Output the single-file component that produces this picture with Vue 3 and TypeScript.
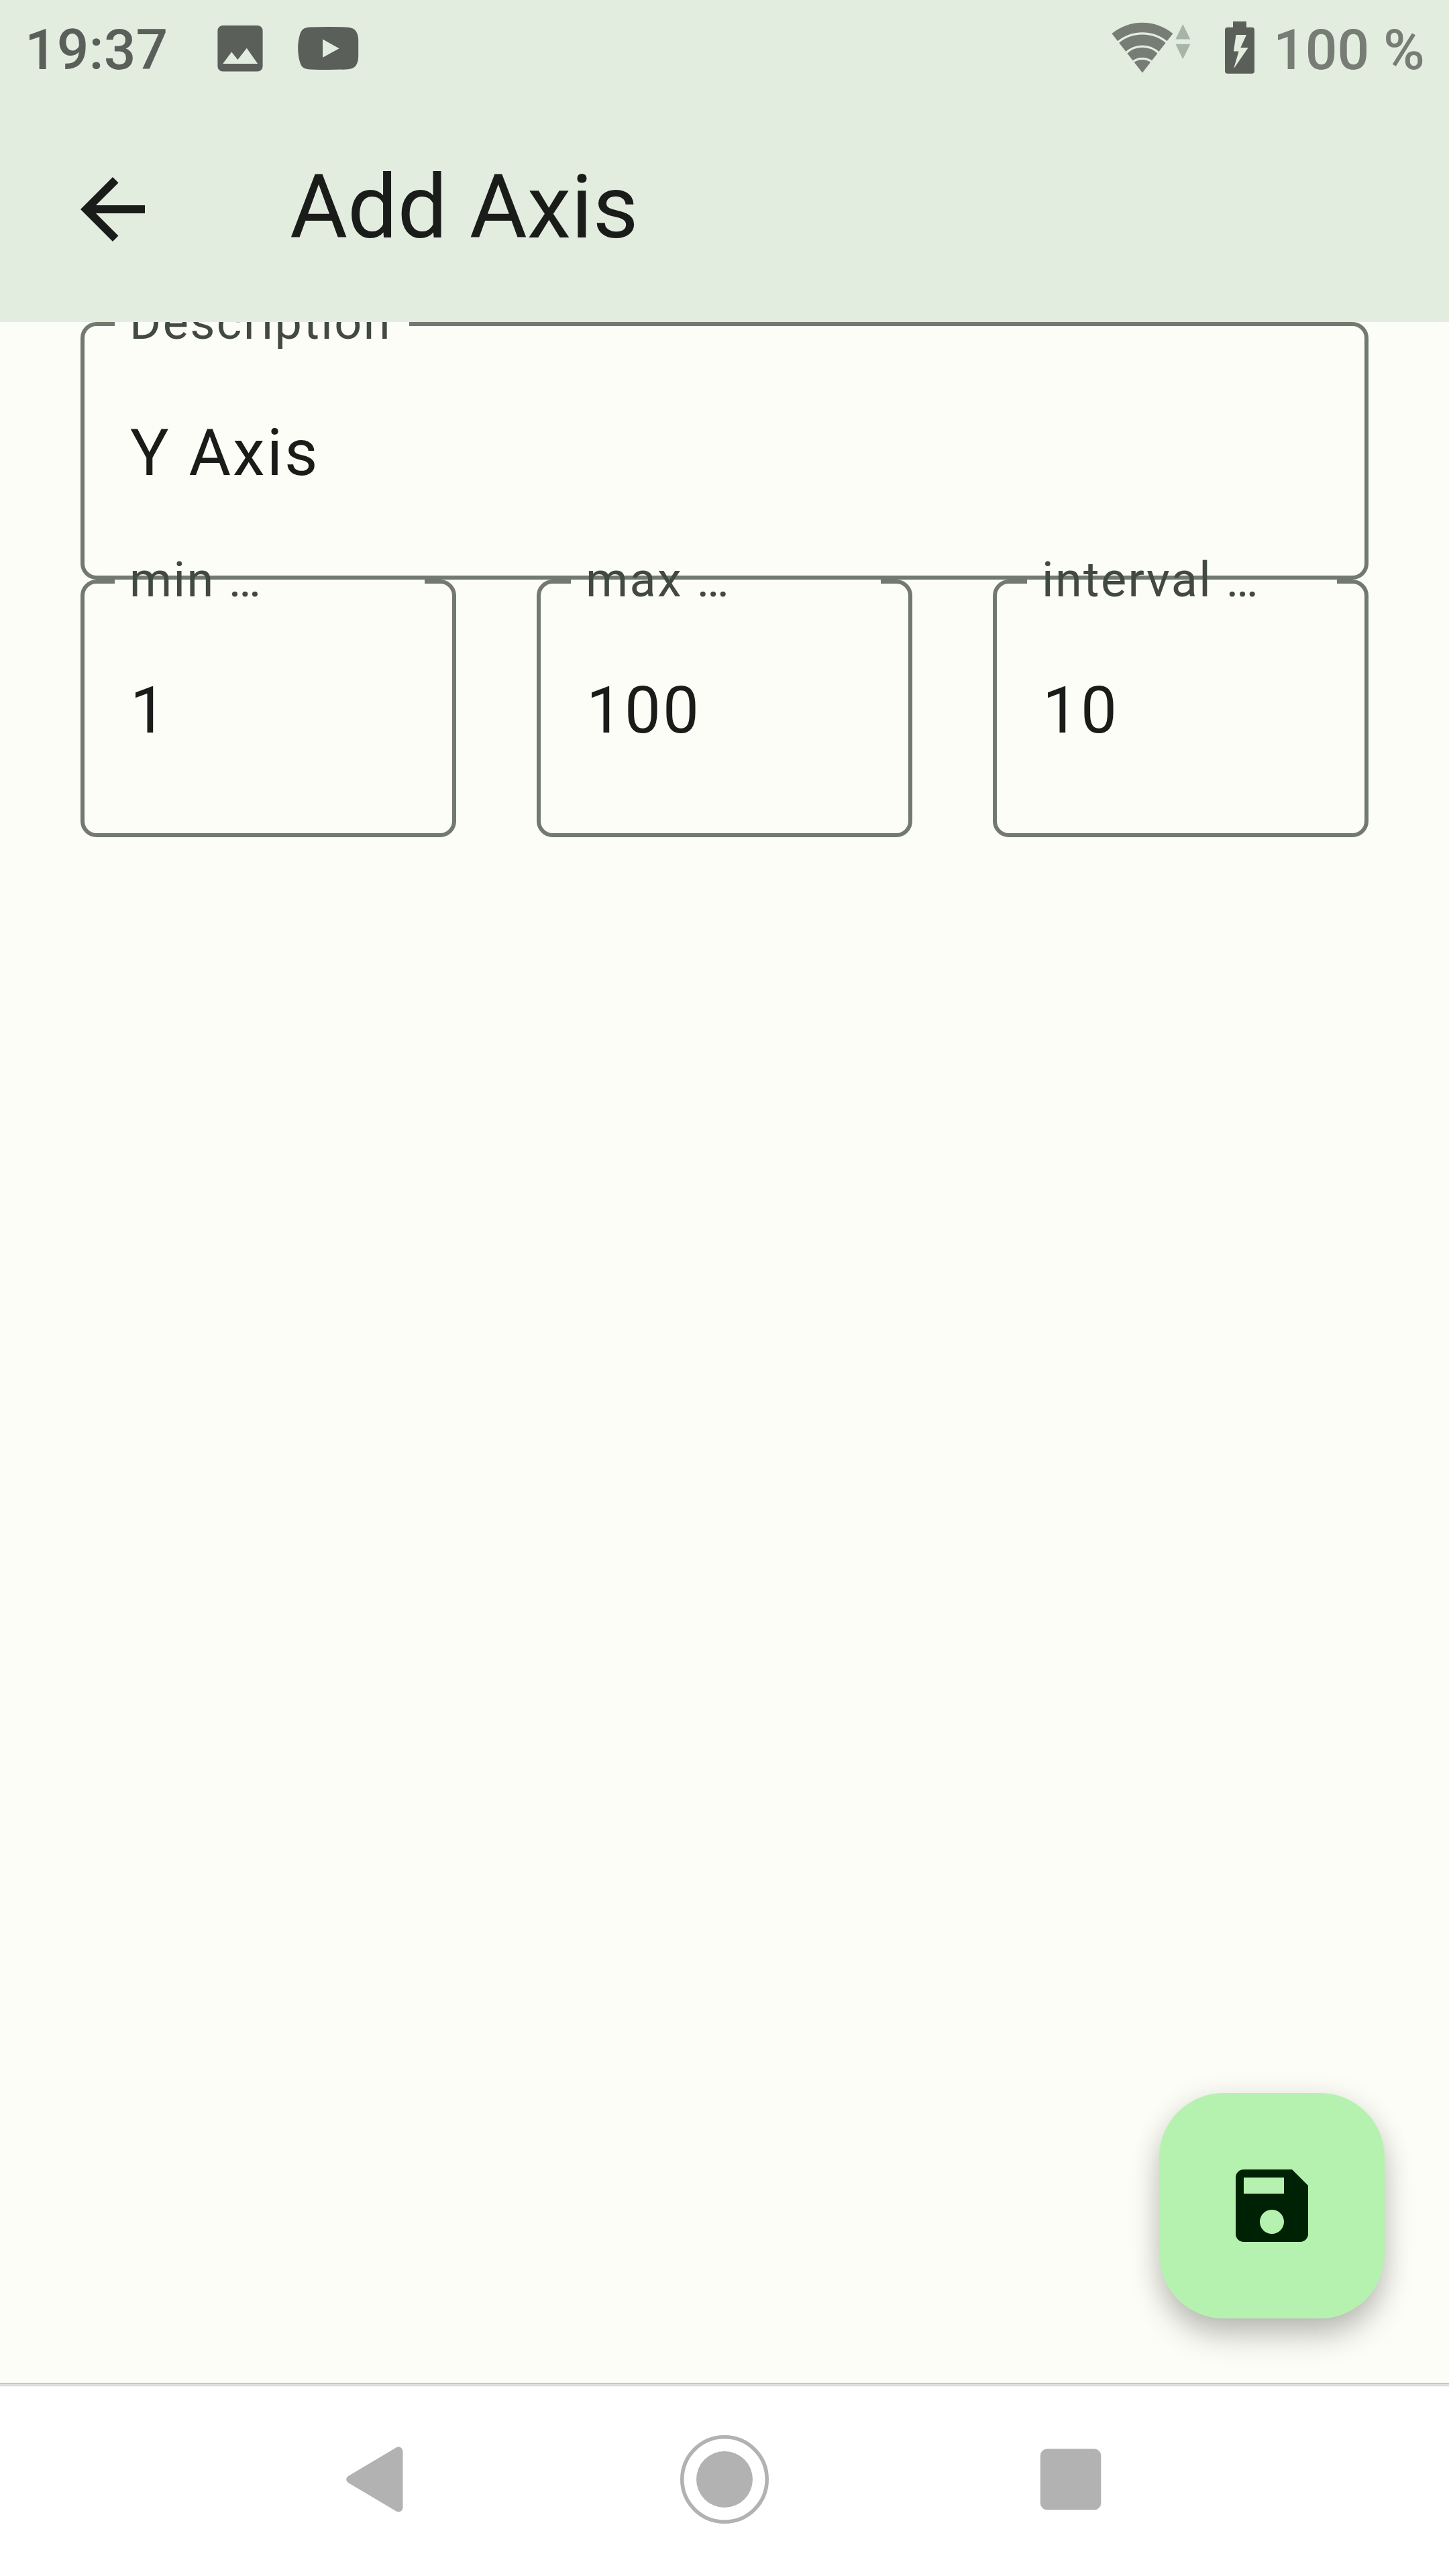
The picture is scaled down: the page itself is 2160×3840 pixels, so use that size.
<script setup lang="ts">
interface Field {
  label: string
  value: string
}

const description: Field = { label: 'Description', value: 'Y Axis' }
const range: Field[] = [
  { label: 'min …', value: '1' },
  { label: 'max …', value: '100' },
  { label: 'interval …', value: '10' },
]
</script>

<template>
  <div class="screen">
    <header class="top">
      <div class="status">
        <span class="clock">19:37</span>
        <svg class="s-image" viewBox="318 0 80 144" width="80" height="144">
          <path fill-rule="evenodd" d="M332 38H384a7.6 7.6 0 0 1 7.6 7.6V99a7.6 7.6 0 0 1-7.6 7.6H332a7.6 7.6 0 0 1-7.6-7.6V45.6A7.6 7.6 0 0 1 332 38ZM332.2 95H384.2L367.8 71.7L354.4 89L345.2 77.5Z" />
        </svg>
        <svg class="s-video" viewBox="440 0 100 144" width="100" height="144">
          <path fill-rule="evenodd" d="M463 40.4Q489 39.4 515 40.4C526 40.6 530 43.5 532.4 50Q534.2 54 534.2 60V84Q534.2 90 532.4 94C530 100.500 526 103.200 515 103.400Q489 104.400 463 103.400C453 103.200 450 100.500 447.500 94C443 80 443 64 447.500 50C450 43.500 453 40.600 463 40.400ZM481 58.600V85.800L505.600 72.300Z" />
        </svg>
        <div class="status-right">
          <svg viewBox="1652 0 128 144" width="128" height="144">
            <path fill="#777c75" d="M1657.400 50A72 72 0 0 1 1748.400 50L1702.900 108.400Z" />
            <g fill="none" stroke="#e2ede0" stroke-width="3.300">
              <path d="M1665 64.400A57 57 0 0 1 1740.800 64.400" />
              <path d="M1677.500 79.900A35.500 35.500 0 0 1 1728.300 79.900" />
              <path d="M1688 92.900A23 23 0 0 1 1717.800 92.900" />
            </g>
            <path fill="#a9b4a9" d="M1752.400 58.400L1763.300 36L1774.300 58.400ZM1752.400 65.800H1774.300L1763.300 88.200Z" />
          </svg>
          <svg class="s-battery" viewBox="1820 0 56 144" width="56" height="144">
            <path fill-rule="evenodd" d="M1838 32H1858V40.700H1866a4 4 0 0 1 4 4V105.800a4 4 0 0 1-4 4H1830a4 4 0 0 1-4-4V44.700a4 4 0 0 1 4-4H1838ZM1842.500 52L1838.900 76.500H1846.600L1839 102.500L1860.700 70.900H1849.300L1858 52Z" />
          </svg>
          <span class="percent">100 %</span>
        </div>
      </div>
      <div class="app-bar">
        <svg viewBox="0 0 24 24" width="144" height="144">
          <path fill="#1a1c19" d="M20 11H7.830l5.590-5.590L12 4l-8 8 8 8 1.410-1.410L7.830 13H20v-2z" />
        </svg>
        <h1>Add Axis</h1>
      </div>
    </header>

    <main class="form">
      <div class="field">
        <i class="notch wide"></i>
        <span class="label">{{ description.label }}</span>
        <span class="value">{{ description.value }}</span>
      </div>
      <div class="row">
        <div v-for="f in range" :key="f.label" class="field">
          <i class="notch"></i>
          <span class="label">{{ f.label }}</span>
          <span class="value">{{ f.value }}</span>
        </div>
      </div>
    </main>

    <button class="fab" type="button" aria-label="Save">
      <svg viewBox="0 0 24 24" width="144" height="144">
        <path fill="#002204" d="M17 3H5c-1.110 0-2 .9-2 2v14c0 1.100.890 2 2 2h14c1.100 0 2-.9 2-2V7l-4-4zm-5 16c-1.660 0-3-1.340-3-3s1.340-3 3-3 3 1.340 3 3-1.340 3-3 3zm3-10H5V5h10v4z" />
      </svg>
    </button>

    <nav class="nav">
      <svg viewBox="498 3630 132 132" width="132" height="132">
        <path fill="#b2b2b2" d="M600.500 3655V3737C600.500 3742 597 3744.500 594 3744.500C592 3744.500 590.500 3743.500 589 3742.600L520 3701.500Q516.200 3699 516.200 3696Q516.200 3693 520 3690.500L589 3649.400C590.500 3648.500 592 3647.500 594 3647.500C597 3647.500 600.500 3650 600.500 3655Z" />
      </svg>
      <svg viewBox="0 0 132 132" width="132" height="132">
        <circle cx="66" cy="66" r="63.200" fill="none" stroke="#b2b2b2" stroke-width="5.600" />
        <circle cx="66" cy="66" r="42" fill="#b2b2b2" />
      </svg>
      <svg viewBox="0 0 132 132" width="132" height="132">
        <rect x="20.800" y="20.500" width="90.500" height="91" rx="10" fill="#b2b2b2" />
      </svg>
    </nav>
  </div>
</template>

<style>
body {
  margin: 0;
}
</style>

<style scoped>
.screen {
  position: relative;
  display: flex;
  flex-direction: column;
  width: 2160px;
  height: 3840px;
  overflow: hidden;
  background: #fcfdf6;
  color: #1a1c19;
  font-family: Roboto, sans-serif;
}
svg {
  display: block;
  flex: none;
}
.top {
  position: relative;
  z-index: 2;
  height: 480px;
  flex: none;
  background: #e2ede0;
}
.status {
  display: flex;
  height: 144px;
  fill: #5a5f59;
  font-size: 84px;
  font-weight: 500;
  line-height: 150px;
  white-space: nowrap;
}
.clock {
  flex: none;
  width: 318px;
  box-sizing: border-box;
  padding-left: 37px;
  color: #5a5f59;
}
.s-video {
  margin-left: 42px;
}
.status-right {
  display: flex;
  width: 508px;
  margin-left: auto;
}
.s-battery {
  margin-left: 40px;
}
.percent {
  margin-left: 22px;
  color: #777c75;
}
.app-bar {
  display: flex;
  align-items: center;
  height: 336px;
  padding-left: 96px;
}
h1 {
  margin: 0 0 6px 192px;
  font-size: 132px;
  font-weight: 400;
  line-height: 168px;
}
.form {
  flex: 1;
  padding: 0 120px;
}
.field {
  position: relative;
  box-sizing: border-box;
  height: 384px;
  border: 6px solid #72796f;
  border-radius: 24px;
  padding: 0 68px;
}
.row {
  display: grid;
  grid-template-columns: repeat(3, 560px);
  justify-content: space-between;
}
.notch {
  position: absolute;
  top: -6px;
  left: 45px;
  right: 41px;
  height: 6px;
  background: #fcfdf6;
}
.notch.wide {
  right: auto;
  width: 439px;
}
.label {
  position: absolute;
  top: -53px;
  left: 67px;
  color: #424940;
  font-size: 72px;
  line-height: 96px;
  letter-spacing: 2.4px;
  white-space: nowrap;
}
.value {
  display: block;
  font-size: 96px;
  line-height: 378px;
  letter-spacing: 3px;
}
.fab {
  position: absolute;
  right: 96px;
  bottom: 384px;
  display: flex;
  align-items: center;
  justify-content: center;
  width: 336px;
  height: 336px;
  padding: 0;
  border: 0;
  border-radius: 96px;
  background: #b6f2af;
  box-shadow: 0 28px 48px -4px rgba(0, 0, 0, 0.24), 0 4px 44px rgba(0, 0, 0, 0.09);
}
.nav {
  display: flex;
  flex: none;
  align-items: center;
  justify-content: center;
  gap: 384px;
  box-sizing: border-box;
  height: 288px;
  background: linear-gradient(#aaa 1px, #dfdfdf 1px, #dfdfdf 5px, #f4f4f4 5px, #f4f4f4 6px, #fff 6px);
}
</style>
